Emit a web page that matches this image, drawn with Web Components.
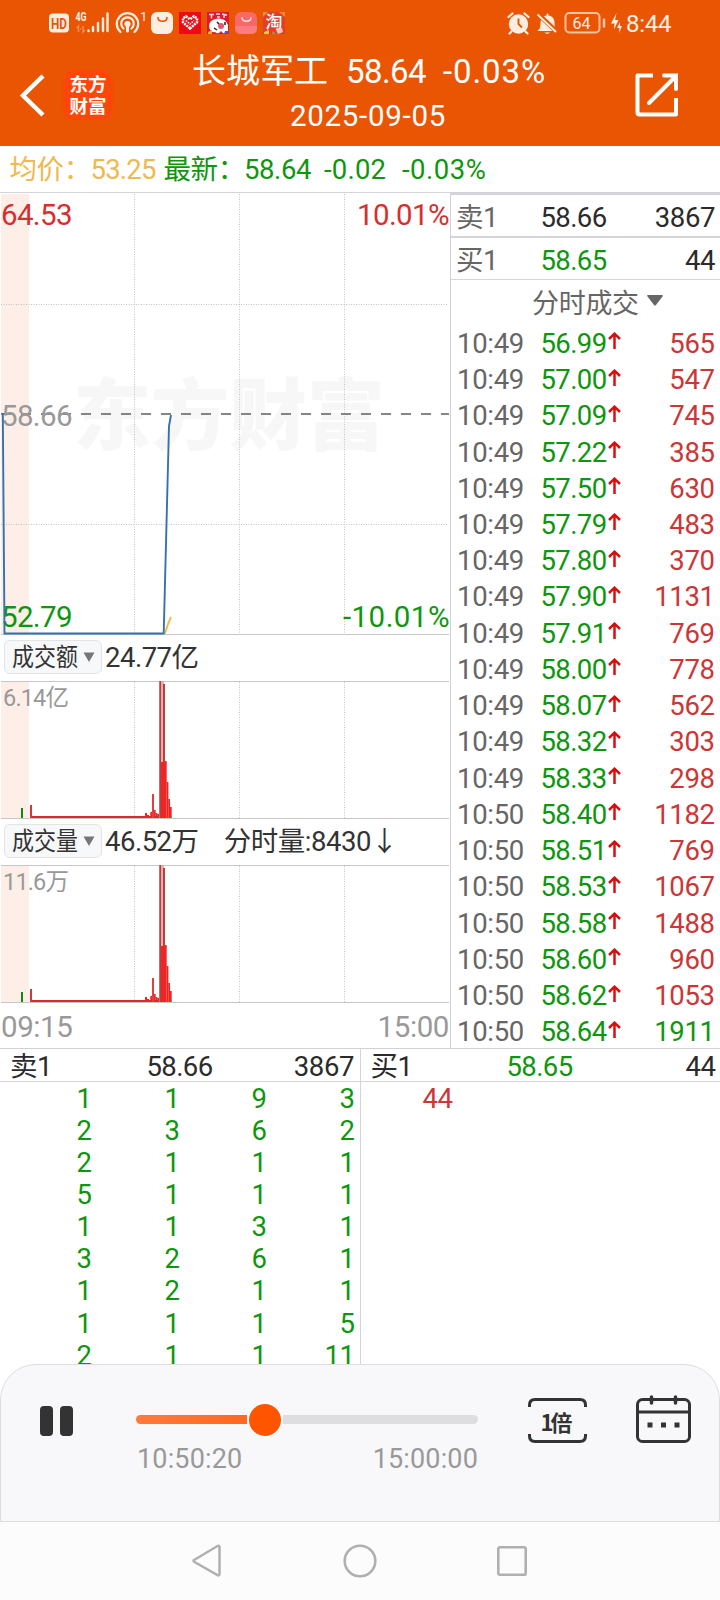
<!DOCTYPE html>
<html lang="zh-CN">
<head>
<meta charset="utf-8">
<title>长城军工 分时回放</title>
<style>
body{margin:0;background:#fff;font-family:Roboto,"Noto Sans CJK SC",sans-serif;font-size:27.5px;letter-spacing:-.4px;line-height:32px;color:#2b2b2b;overflow:hidden}
</style>
</head>
<body>
<replay-app></replay-app>
<script>
const define = (name, html) => customElements.define(name, class extends HTMLElement {
  connectedCallback() {
    if (this.shadowRoot) return;
    const t = document.createElement('template');
    t.innerHTML = typeof html === 'function' ? html(this) : html;
    this.attachShadow({mode: 'open'}).append(t.content.cloneNode(true));
  }
});

define('status-bar', `
<style>
:host{display:flex;height:46px;justify-content:space-between;padding:0 48px 0 48px;color:#fdeee2;letter-spacing:0}
svg{display:block}
text{font-family:Roboto,"Noto Sans CJK SC",sans-serif}
</style>
<svg width="240" height="46" viewBox="48 0 240 46">
  <rect x="49" y="13.500" width="20" height="19" rx="4" fill="#fdeee2"/>
  <text x="51" y="28.500" font-size="15" font-weight="700" fill="#ea5504" textLength="16" lengthAdjust="spacingAndGlyphs">HD</text>
  <text x="75.500" y="21" font-size="12" font-weight="700" fill="#fdeee2" textLength="11" lengthAdjust="spacingAndGlyphs">4G</text>
  <g stroke="#f08c55" stroke-width="1.500" fill="none"><path d="M78.500 32V26l-2 2M83 26v6l2-2M80 29h1"/></g>
  <g stroke="#fdeee2" stroke-width="2.400" stroke-linecap="round"><path d="M88.500 30.500v.5M93 27v4M98 23v8M103 18.500v12.500M107.500 13.500v17.500"/></g>
  <g fill="none" stroke="#fdeee2" stroke-width="2.200" stroke-linecap="round">
    <path d="M120.500 32a10.700 10.700 0 1 1 14 0M123.500 28.500a6.300 6.300 0 1 1 8 0"/><circle cx="127.500" cy="24" r="2" fill="#fdeee2"/><path d="M127.500 26v5" stroke-width="3"/>
  </g>
  <text x="140" y="21" font-size="13" fill="#fdeee2">1</text>
  <rect x="151" y="12" width="22" height="22" rx="6" fill="#fdeee2"/>
  <path d="M158 17.500c0 5 9 5 9 0" fill="none" stroke="#ea5504" stroke-width="1.600" stroke-linecap="round"/>
  <rect x="179" y="12" width="22" height="22" fill="#f00814"/>
  <path d="M190 28.500l-7-6.200v-4l3-2 4 3 4-3 3 2v4z" fill="none" stroke="#fff" stroke-width="2.500" stroke-dasharray="2 .8"/>
  <path d="M186 20.500l4 3.500 4-3.500" fill="none" stroke="#fff" stroke-width="1.500" stroke-dasharray="1.500 1"/>
  <rect x="207" y="12" width="22" height="22" fill="#e2182c"/>
  <path d="M209 14.500h5M211.500 14.500v4M216 14h4M217 17h3M222 14l5 1M224 14v4" stroke="#ffd9dc" stroke-width="1.500"/>
  <path d="M209 26q0-5 6-7q10-2 13 6v6q-2 3-5 2l-2-2q-3 4-6 1q-5 1-6-6z" fill="#fff"/>
  <circle cx="221" cy="26" r="3" fill="#e2586a"/><path d="M217 22l2 2M225 22v3M214 28l3 2" stroke="#222" stroke-width="1.500"/><path d="M208 32l4-2v4h-4z" fill="#f0b030"/><path d="M225 31h4v3h-5z" fill="#7b3bd0"/>
  <rect x="235" y="12" width="22" height="22" rx="6" fill="#f96868"/><path d="M235 26h22v2q0 6-6 6h-10q-6 0-6-6z" fill="#ff7d80"/>
  <path d="M242 17.500c0 5 9 5 9 0" fill="none" stroke="#ffe1df" stroke-width="1.400" stroke-linecap="round"/>
  <rect x="263" y="12" width="22" height="22" fill="#e0402a"/>
  <path d="M263 12h5l-5 5zM279 12h6v5z" fill="#f08a3a"/>
  <text x="265.500" y="28" font-size="17" font-weight="500" fill="#fff">淘</text>
  <path d="M264 32l5-2v4h-5z" fill="#f3c63c"/><path d="M273 31l3 3h-4z" fill="#69b34a"/><path d="M276 30l6-2 1 4-5 2z" fill="#f7c6b5"/>
</svg>
<svg width="168" height="46" viewBox="504 0 168 46">
  <circle cx="518.500" cy="24" r="9.700" fill="#fdeee2"/>
  <path d="M518.500 18.500v5.500l3.500 3.500" fill="none" stroke="#ea5504" stroke-width="1.900"/>
  <path d="M508.500 17l4-3.500M528.500 17l-4-3.500M511.500 31.500l-2 2M525.500 31.500l2 2" stroke="#fdeee2" stroke-width="2.200" stroke-linecap="round"/>
  <path d="M537.500 31c2-2 3-3 3-8c0-4 2-7 6-7.600c0-2.500 2-2.500 2 0c4 .6 6 3.600 6 7.600c0 5 1 6 3 8z" fill="#fdeee2"/><path d="M544.500 32.500h5.500q-2.700 2.800-5.500 0z" fill="#fdeee2"/>
  <path d="M537 13l20 19" stroke="#ea5504" stroke-width="4.500"/><path d="M537.500 14.500l18.500 17.500" stroke="#fdeee2" stroke-width="1.800"/>
  <rect x="565.500" y="13" width="34" height="19.500" rx="4" fill="none" stroke="#f9c3a2" stroke-width="2"/>
  <path d="M604 18.500v9" stroke="#f9c3a2" stroke-width="2.500"/>
  <text x="572.500" y="28.500" font-size="16" font-weight="400" fill="#fdeee2">64</text>
  <path d="M616.500 13l-5.500 10.500h3.500l-.5 6 4.500-9.500h-3.500zM620 22l-3 6h2.500l-.5 5 3-7h-2z" fill="#fdeee2"/>
  <text x="626" y="31.500" font-size="24" fill="#fdeee2" textLength="45.500">8:44</text>
</svg>`);

define('app-header', `
<style>
:host{display:block;height:146px;background:#ea5504;color:#fff}
.bar{display:grid;grid-template-columns:180px 1fr 120px;height:100px;align-items:start}
.left{display:flex;gap:18px;padding:24px 0 0 18px;align-items:center}
.logo{width:50px;height:50px;border-radius:12px;background:#ff4609;display:grid;place-content:center;font-family:"Noto Sans CJK SC",sans-serif;font-weight:700;font-size:18.500px;line-height:22px;letter-spacing:0;padding-bottom:2px;box-sizing:border-box}
h1{display:grid;grid-template-columns:154px 97px auto;justify-content:start;margin:3px 0 0 12px;font-weight:400;font-size:34px;line-height:44px;letter-spacing:0;white-space:pre;align-items:baseline}
h1 span+span{font-size:33px;letter-spacing:-.6px}h1 span+span+span{letter-spacing:.9px}
.date{font-size:29.500px;line-height:36px;margin-top:4px;margin-left:110px;letter-spacing:.7px}
.right{display:flex;justify-content:flex-end;padding:27px 42px 0 0}
svg{display:block}
</style>
<status-bar></status-bar>
<div class="bar">
  <div class="left">
    <svg width="27" height="44" viewBox="0 0 27 44"><path d="M25 3L5 22.500 25 42" fill="none" stroke="#fff" stroke-width="4.500"/></svg>
    <div class="logo"><span>东方</span><span>财富</span></div>
  </div>
  <div><h1><span>长城军工</span><span>58.64</span><span>-0.03%</span></h1><div class="date">2025-09-05</div></div>
  <div class="right"><svg width="43" height="44" viewBox="635 73 43 44"><g fill="none" stroke="#fff" stroke-width="4"><path d="M653 75.500H637.500V112.500q0 2 2 2H676V98" stroke-linejoin="round"/><path d="M664 75.500h12V89M675 77L649 103" stroke-linecap="round"/></g></svg></div>
</div>`);

define('quote-line', `
<style>
:host{display:grid;grid-template-columns:81px 73px 80.500px 80px 78px auto;justify-content:start;height:46px;box-sizing:border-box;padding:0 0 0 9.500px;align-items:center;border-bottom:1px solid #d3d4da;color:#0f960f;margin-top:1px}
.avg{color:#efb94e}.avg+.avg{letter-spacing:-.8px}span{white-space:nowrap}.c{letter-spacing:.2px}.r{letter-spacing:.5px}
</style>
<span class="avg">均价：</span><span class="avg">53.25</span><span>最新：</span><span>58.64</span><span class="c">-0.02</span><span class="r">-0.03%</span>`);

const grid = (h) => [134.5, 239.5, 344.5].map(x => `<path d="M${x} 1V${h}" stroke="#c3c3c3" stroke-dasharray="1 1.500"/>`).join('');
const chartCss = `<style>:host{display:block;letter-spacing:0}svg{display:block}text{font-family:Roboto,"Noto Sans CJK SC",sans-serif}</style>`;

define('price-chart', `${chartCss}
<svg width="450" height="442" viewBox="0 193 450 442">
  <rect x="1" y="194" width="28" height="440" fill="#fdeee8"/>
  <text x="73" y="444" font-size="78" font-weight="900" fill="#f7f7f7" textLength="312">东方财富</text>
  <g transform="translate(0 193)">${grid(441)}</g>
  <path d="M1 304.500H448M1 524.500H448" stroke="#c3c3c3" stroke-dasharray="1 1.500"/>
  <path d="M1 414H449" stroke="#858585" stroke-width="2" stroke-dasharray="10 10"/>
  <path d="M1 634.500H449" stroke="#c4c6ca"/>
  <path d="M165 633.500L168 624 171 617" fill="none" stroke="#eebd52" stroke-width="2"/>
  <g font-size="29.500">
    <text x="1" y="225" fill="#d62f2f" textLength="71.500">64.53</text><text x="357" y="225" fill="#d62f2f" textLength="92.500">10.01%</text>
    <text x="1" y="425.500" fill="#999" textLength="71.500">58.66</text>
    <text x="1" y="626.500" fill="#0f960f" textLength="71.500">52.79</text><text x="343" y="626.500" fill="#0f960f" textLength="106.500">-10.01%</text>
  </g>
  <path d="M2.800 413L4.500 633.500H163.700L169 426 171 415" fill="none" stroke="#3771ad" stroke-width="1.900"/>
</svg>`);

define('volume-chart', el => {
  const dark = '#a94747', red = '#f02424', base = 137;
  const bars = [[30,2,13,'#d93636'],[145,2,5,red],[147,2,3,red],[150.3,2,6,red],[152,2,24,'#e04040'],[154,1.7,8,red],[155.7,1.7,5,red],[157.3,1.7,4,red],[159,5,137,'#f7a5a5'],[159.4,1.6,137,dark],[161,4,56,red],[163,2,134,dark],[165,1.7,57,red],[166.7,1.7,36,red],[168.3,1.7,19,red],[170,1.7,11,red],[161,4,56,red]];
  return `${chartCss}
<svg width="450" height="138" viewBox="0 0 450 138">
  <rect x="1" y="1" width="28" height="136" fill="#fdeee8"/>${grid(137)}
  <path d="M1 .5H449M1 137.500H449" stroke="#c4c6ca"/>
  <text x="3" y="25" font-size="23.500" fill="#999" textLength="66">${el.getAttribute('top')}</text>
  <rect x="21" y="127" width="2" height="10" fill="#158515"/><rect x="31" y="135" width="130" height="2" fill="#d62c2c"/>
  ${bars.map(b => `<rect x="${b[0]}" y="${base - b[2]}" width="${b[1]}" height="${b[2]}" fill="${b[3]}"/>`).join('')}
</svg>`;
});

define('metric-row', `
<style>
:host{display:flex;height:46px;align-items:flex-start;padding:5px 0 0 4px;box-sizing:border-box;white-space:pre;color:#333}
.btn{display:flex;box-sizing:border-box;width:98px;height:34px;border:1px solid #e2e4e8;border-radius:6px;background:#f7f8fa;padding-left:7px;align-items:center;gap:5px;margin-right:3px}
.n{width:66px;height:32px;flex:none}.n span{display:block;font-size:25px;line-height:33px;transform:scaleX(.88);transform-origin:0 0;width:76px;letter-spacing:0}
.v{line-height:36px;letter-spacing:-.5px}
</style>
<div class="btn"><div class="n"><span><slot name="name"></slot></span></div><svg width="12" height="10"><path d="M.5 0.500h11L6 10z" fill="#777"/></svg></div><div class="v"><slot></slot></div>`);

const times = '10:49 '.repeat(13).trim().split(' ').concat('10:50 '.repeat(7).trim().split(' '));
const prices = '56.99 57.00 57.09 57.22 57.50 57.79 57.80 57.90 57.91 58.00 58.07 58.32 58.33 58.40 58.51 58.53 58.58 58.60 58.62 58.64'.split(' ');
const vols = '565 547 745 385 630 483 370 1131 769 778 562 303 298 1182 769 1067 1488 960 1053 1911'.split(' ');

define('trade-row', `
<style>
:host{display:grid;grid-template-columns:83.500px 65px 14px 1fr;height:36.240px;box-sizing:border-box;padding:6px 5.500px 0 6px;align-items:center;color:#0f960f}
.t{color:#666;letter-spacing:-.3px}.p{letter-spacing:-.6px}.v{text-align:right}svg{display:block;margin:-6px 0 0 2px}
</style>
<span class="t"><slot name="time"></slot></span><span class="p"><slot name="price"></slot></span>
<svg width="13" height="17" viewBox="0 0 13 17"><path d="M6.500 17V1.700M1 7L6.500 1.700 12 7" fill="none" stroke="#d80f0f" stroke-width="2.500"/></svg>
<span class="v"><slot name="vol"></slot></span>`);

define('trade-panel', () => `
<style>
:host{display:flex;flex-direction:column;border-left:1px solid #d0d2d8;height:855px;box-sizing:border-box}
.q{display:grid;grid-template-columns:83.500px 1fr auto;height:43px;box-sizing:border-box;padding:4px 5px 0 5px;align-items:center;border-top:2px solid #d3d4dc}
.q.b{border-bottom:1px solid #d3d4dc;height:44px}
.q span:first-child{color:#666}.q.b span:nth-child(2){color:#0f960f}.q span:nth-child(2){letter-spacing:-.6px}
.q span:nth-child(2){margin-left:1px}
.h{display:flex;height:41.800px;box-sizing:border-box;align-items:center;padding:6px 0 0 81px;gap:8px;color:#666}.h span{font-size:27px;letter-spacing:-.3px}.h svg{margin-top:-7px}
</style>
<div class="q"><span>卖1</span><span>58.66</span><span>3867</span></div>
<div class="q b"><span>买1</span><span>58.65</span><span>44</span></div>
<div class="h"><span>分时成交</span><svg width="16" height="11"><path d="M1 0h14q1.500 0 .5 1.500L9 10q-1 1-2 0L.5 1.500Q-.5 0 1 0z" fill="#666"/></svg></div>
${prices.map((p, i) => `<trade-row><span slot="time">${times[i]}</span><span slot="price">${p}</span><span slot="vol"${i < 19 ? ' style="color:#cc3636"' : ''}>${vols[i]}</span></trade-row>`).join('')}`);

define('chart-panel', `
<style>
:host{display:block;height:855px}
.x{display:flex;justify-content:space-between;height:44px;box-sizing:border-box;padding:6px 1px 0 1px;font-size:29.500px;line-height:36px;color:#999;letter-spacing:-.4px}
</style>
<price-chart></price-chart>
<metric-row><span slot="name">成交额</span>24.77亿</metric-row>
<volume-chart top="6.14亿"></volume-chart>
<metric-row><span slot="name">成交量</span>46.52万    分时量:8430↓</metric-row>
<volume-chart top="11.6万"></volume-chart>
<div class="x"><span>09:15</span><span>15:00</span></div>`);

const queue = [[1,1,9,3],[2,3,6,2],[2,1,1,1],[5,1,1,1],[1,1,3,1],[3,2,6,1],[1,2,1,1],[1,1,1,5],[2,1,1,11]];
define('order-book', () => `
<style>
:host{display:grid;grid-template-columns:361px 359px;height:316px;border-top:1px solid #d0d2d4;box-sizing:border-box}
.s{border-right:1px solid #d3d5d7}
.h{display:grid;height:33px;box-sizing:border-box;border-bottom:1px solid #d3d5d7;align-items:center;line-height:28px}
.s .h{grid-template-columns:136.500px 1fr auto;padding:3px 6px 0 10px}
.b .h{grid-template-columns:136px 1fr auto;padding:3px 4.500px 0 9.500px}
.h span:nth-child(2){letter-spacing:-.6px}
.b .h span:nth-child(2){color:#0f960f}
.g{display:grid;grid-template-columns:91.500px 88px 87px 88px;grid-auto-rows:32.080px;padding-top:1px;text-align:right;line-height:32px;height:281px;color:#0f960f}
.b .g{color:#cc3636;grid-template-columns:91.500px}
</style>
<div class="s"><div class="h"><span>卖1</span><span>58.66</span><span>3867</span></div><div class="g">${queue.flat().map(v => `<span>${v}</span>`).join('')}</div></div>
<div class="b"><div class="h"><span>买1</span><span>58.65</span><span>44</span></div><div class="g"><span>44</span></div></div>`);

define('replay-controls', `
<style>
:host{display:flex;height:158px;box-sizing:border-box;border:1px solid #dddde0;border-radius:36px 36px 0 0;background:#f8f8fa;padding:32px 0 0 39px;align-items:flex-start}
svg{display:block}text{font-family:"Noto Sans CJK SC",sans-serif;letter-spacing:0}
.pause{margin:9px 63px 0 0}
.t{width:342px}
.n{display:flex;justify-content:space-between;font-size:27px;line-height:32px;color:#999;padding-left:1px;letter-spacing:.15px}
.rate{margin:0 48px 0 50px}.cal{margin-top:-2px}
</style>
<svg class="pause" width="33" height="30"><rect width="13" height="30" rx="4" fill="#333"/><rect x="20" width="13" height="30" rx="4" fill="#333"/></svg>
<div class="t">
<svg width="342" height="46" viewBox="136 1397 342 46"><defs><linearGradient id="g"><stop stop-color="#ff7a3d"/><stop offset="1" stop-color="#ff6820"/></linearGradient></defs>
<path d="M247 1415H140.500a4.500 4.500 0 0 0 0 9H247z" fill="url(#g)"/><path d="M283 1415H473.500a4.500 4.500 0 0 1 0 9H283z" fill="#dedee0"/><circle cx="265" cy="1420" r="17.500" fill="#fff"/><circle cx="265" cy="1420" r="16" fill="#ff5500"/></svg>
<div class="n"><span>10:50:20</span><span>15:00:00</span></div></div>
<svg class="rate" width="60" height="47" viewBox="528 1397 60 47"><g fill="none" stroke="#333" stroke-width="3"><path d="M529.500 1407v-2q0-5.500 5.500-5.500h45q5.500 0 5.500 5.500v2M529.500 1434v2q0 5.500 5.500 5.500h45q5.500 0 5.500-5.500v-2"/></g><text x="540.500" y="1430.500" font-size="22" font-weight="700" fill="#333" textLength="32">1倍</text></svg>
<svg class="cal" width="56" height="49" viewBox="636 1395 56 49"><g fill="none" stroke="#333" stroke-width="3"><rect x="637.500" y="1399.500" width="52" height="42" rx="5"/><path d="M638 1412h52"/><path d="M651.500 1397v6M675.500 1397v6" stroke-width="3.500" stroke-linecap="round"/></g><path d="M647.500 1422.500h5v5h-5zM661 1422.500h5v5h-5zM674.500 1422.500h5v5h-5z" fill="#333"/></svg>`);

define('nav-bar', `
<style>:host{display:flex;height:78px;background:#fcfcfc;justify-content:center;align-items:center;gap:118px}svg{display:block}</style>
<svg width="34" height="36" viewBox="190 1543 34 36"><path d="M218.500 1547v27q0 2-2 1.200L193.500 1562q-2-1.200 0-2.300l23-13.700q2-1 2 1z" fill="none" stroke="#b0b0b0" stroke-width="2.500"/></svg>
<svg width="34" height="34"><circle cx="17" cy="17" r="15.300" fill="none" stroke="#b0b0b0" stroke-width="2.600"/></svg>
<svg width="34" height="34"><rect x="3.300" y="3.300" width="27.400" height="27.400" rx="1.500" fill="none" stroke="#b0b0b0" stroke-width="2.600"/></svg>`);

define('replay-app', `
<style>
:host{display:flex;flex-direction:column;width:720px;height:1600px;background:#fff}
.m{display:grid;grid-template-columns:450px 270px;height:855px}
order-book,replay-controls,nav-bar{flex:none}
</style>
<app-header></app-header><quote-line></quote-line>
<div class="m"><chart-panel></chart-panel><trade-panel></trade-panel></div>
<order-book></order-book><replay-controls></replay-controls><nav-bar></nav-bar>`);
</script>
</body>
</html>
